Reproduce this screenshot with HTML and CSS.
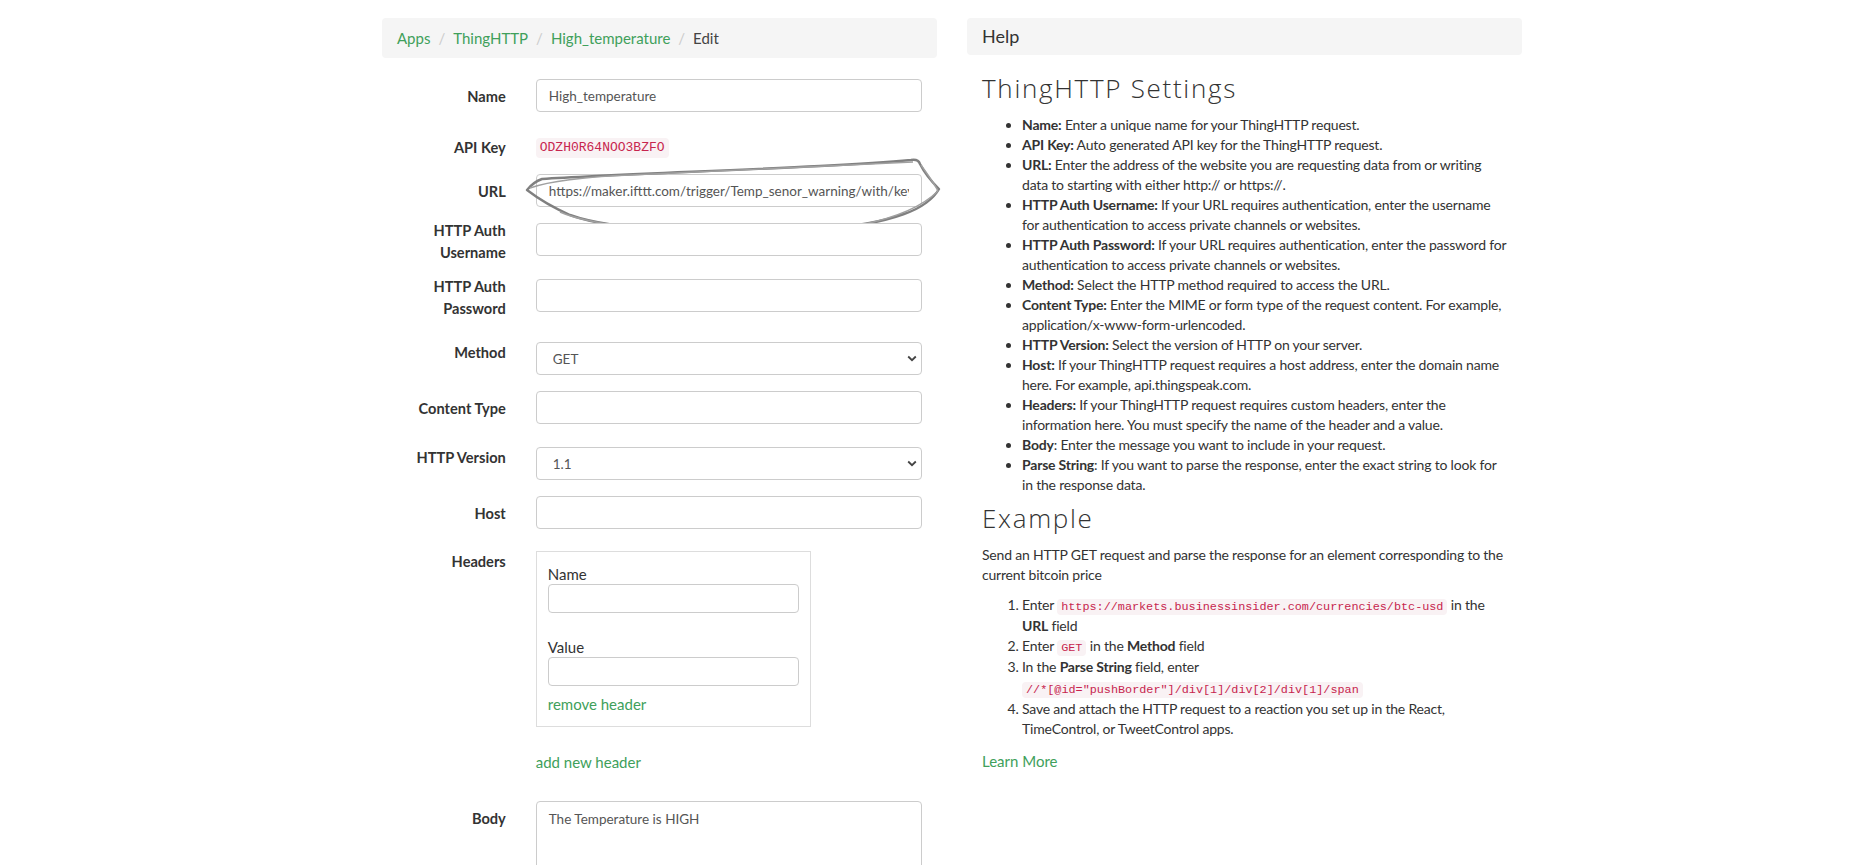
FILE: index.html
```html
<!DOCTYPE html>
<html lang="en">
<head>
<meta charset="utf-8">
<title>ThingHTTP - Edit</title>
<link rel="stylesheet" href="styles.css">
</head>
<body>
<div class="page">
  <div class="col-left">
    <ol class="breadcrumb">
      <li><a href="#">Apps</a></li>
      <li><a href="#">ThingHTTP</a></li>
      <li><a href="#">High_temperature</a></li>
      <li class="active">Edit</li>
    </ol>

    <form class="form">
      <div class="row mb-18">
        <label class="lbl">Name</label>
        <div class="fld"><input class="ctl" type="text" value="High_temperature"></div>
      </div>

      <div class="row row-api mb-11">
        <label class="lbl">API Key</label>
        <div class="fld"><code class="apikey">ODZH0R64NOO3BZFO</code></div>
      </div>

      <div class="row row-url mb-16">
        <label class="lbl">URL</label>
        <div class="fld"><input class="ctl" type="text" value="https://maker.ifttt.com/trigger/Temp_senor_warning/with/key/"></div>
        <svg class="scribble" width="430" height="84" viewBox="0 0 430 84" aria-hidden="true">
          <path d="M7 35 C 11 30, 16 26, 22 24 C 80 20, 200 16, 300 11 C 340 9, 370 7, 391 5 C 397 4, 399 6, 400 9 C 404 17, 412 27, 419 34 C 414 43, 402 53, 384 59 C 362 67, 332 72, 300 74 C 250 77, 200 77, 150 75 C 110 73, 72 68, 50 60 C 34 53, 20 45, 7 35 Z" fill="none" stroke="#808080" stroke-width="2.4" stroke-linejoin="round"/>
          <path d="M10 33 C 30 26, 60 22, 110 20 C 190 16, 280 12, 393 7 M401 10 C 408 20, 414 28, 418 36 C 405 49, 380 62, 340 70 C 290 77, 200 79, 130 74 C 90 71, 55 64, 40 57" fill="none" stroke="#a0a0a0" stroke-width="1.4"/>
        </svg>
      </div>

      <div class="row row-two mb-15">
        <label class="lbl">HTTP Auth Username</label>
        <div class="fld"><input class="ctl" type="text"></div>
      </div>

      <div class="row row-two mb-22">
        <label class="lbl">HTTP Auth Password</label>
        <div class="fld"><input class="ctl" type="password"></div>
      </div>

      <div class="row row-sel mb-16">
        <label class="lbl">Method</label>
        <div class="fld">
          <div class="sel">
            <select class="ctl ctl-sel"><option>GET</option></select>
            <svg class="chev" width="10" height="7" viewBox="0 0 10 7" aria-hidden="true"><path d="M1.2 1.5 L5 5.2 L8.8 1.5" fill="none" stroke="#444" stroke-width="1.8"/></svg>
          </div>
        </div>
      </div>

      <div class="row mb-23">
        <label class="lbl">Content Type</label>
        <div class="fld"><input class="ctl" type="text"></div>
      </div>

      <div class="row row-sel mb-16">
        <label class="lbl">HTTP Version</label>
        <div class="fld">
          <div class="sel">
            <select class="ctl ctl-sel"><option>1.1</option></select>
            <svg class="chev" width="10" height="7" viewBox="0 0 10 7" aria-hidden="true"><path d="M1.2 1.5 L5 5.2 L8.8 1.5" fill="none" stroke="#444" stroke-width="1.8"/></svg>
          </div>
        </div>
      </div>

      <div class="row mb-22">
        <label class="lbl">Host</label>
        <div class="fld"><input class="ctl" type="text"></div>
      </div>

      <div class="row row-sel">
        <label class="lbl">Headers</label>
        <div class="fld">
          <div class="hdrbox">
            <div class="hdr-group">
              <label class="hdr-lbl">Name</label>
              <input class="ctl ctl-sm" type="text">
            </div>
            <div class="hdr-group hdr-group-2">
              <label class="hdr-lbl">Value</label>
              <input class="ctl ctl-sm" type="text">
            </div>
            <a class="hdr-link" href="#">remove header</a>
          </div>
          <a class="add-link" href="#">add new header</a>
        </div>
      </div>

      <div class="row row-body">
        <label class="lbl">Body</label>
        <div class="fld"><textarea class="ctl ctl-area">The Temperature is HIGH</textarea></div>
      </div>
    </form>
  </div>

  <div class="col-right">
    <div class="help-bar">Help</div>
    <div class="help-body">
      <h3 class="h-settings">ThingHTTP Settings</h3>
      <ul class="help-list">
        <li><b>Name:</b> Enter a unique name for your ThingHTTP request.</li>
        <li><b>API Key:</b> Auto generated API key for the ThingHTTP request.</li>
        <li><b>URL:</b> Enter the address of the website you are requesting data from or writing<br>data to starting with either http:// or https://.</li>
        <li><b>HTTP Auth Username:</b> If your URL requires authentication, enter the username<br>for authentication to access private channels or websites.</li>
        <li><b>HTTP Auth Password:</b> If your URL requires authentication, enter the password for<br>authentication to access private channels or websites.</li>
        <li><b>Method:</b> Select the HTTP method required to access the URL.</li>
        <li><b>Content Type:</b> Enter the MIME or form type of the request content. For example,<br>application/x-www-form-urlencoded.</li>
        <li><b>HTTP Version:</b> Select the version of HTTP on your server.</li>
        <li><b>Host:</b> If your ThingHTTP request requires a host address, enter the domain name<br>here. For example, api.thingspeak.com.</li>
        <li><b>Headers:</b> If your ThingHTTP request requires custom headers, enter the<br>information here. You must specify the name of the header and a value.</li>
        <li><b>Body</b>: Enter the message you want to include in your request.</li>
        <li><b>Parse String</b>: If you want to parse the response, enter the exact string to look for<br>in the response data.</li>
      </ul>
      <h3 class="h-example">Example</h3>
      <p class="help-p">Send an HTTP GET request and parse the response for an element corresponding to the<br>current bitcoin price</p>
      <ol class="help-ol">
        <li>Enter <code>https://markets.businessinsider.com/currencies/btc-usd</code> in the<br><b>URL</b> field</li>
        <li>Enter <code>GET</code> in the <b>Method</b> field</li>
        <li>In the <b>Parse String</b> field, enter<br><code>//*[@id="pushBorder"]/div[1]/div[2]/div[1]/span</code></li>
        <li>Save and attach the HTTP request to a reaction you set up in the React,<br>TimeControl, or TweetControl apps.</li>
      </ol>
      <a class="learn" href="#">Learn More</a>
    </div>
  </div>
</div>
</body>
</html>
```

FILE: styles.css
```css
* { box-sizing: border-box; }

html, body {
  margin: 0;
  padding: 0;
  background: #fff;
}

body {
  font-family: "Lato", "Liberation Sans", sans-serif;
  font-size: 14px;
  line-height: 20px;
  color: #333;
  overflow: hidden;
}

a {
  color: #40a05b;
  text-decoration: none;
}

.page {
  display: flex;
  gap: 30px;
  width: 1140px;
  margin-left: 382px;
  padding-top: 18px;
}

.col-left,
.col-right {
  width: 555px;
  flex: none;
}

/* breadcrumb */
.breadcrumb {
  display: flex;
  margin: 0 0 21px;
  padding: 8px 15px;
  height: 40px;
  list-style: none;
  background: #f5f5f5;
  border-radius: 4px;
  font-size: 15px;
  line-height: 24px;
}

.breadcrumb li + li::before {
  content: "/";
  color: #ccc;
  padding: 0 8px;
}

.breadcrumb .active {
  color: #444;
}

/* form rows */
.form {
  margin: 0;
}

.row {
  position: relative;
  display: flex;
  align-items: flex-start;
}

.mb-11 { margin-bottom: 11px; }
.mb-15 { margin-bottom: 15px; }
.mb-16 { margin-bottom: 16px; }
.mb-18 { margin-bottom: 18px; }
.mb-22 { margin-bottom: 22px; }
.mb-23 { margin-bottom: 23px; }

.lbl {
  width: 138.75px;
  flex: none;
  padding: 7px 15px 0 10px;
  text-align: right;
  font-weight: 700;
  font-size: 14.6px;
  line-height: 22px;
  color: #333;
}

.row-two .lbl {
  padding-top: 0;
  margin-top: -3px;
}

.row-sel .lbl {
  padding-top: 0;
}

.fld {
  flex: 1;
  padding: 0 15px;
}

.ctl {
  display: block;
  width: 100%;
  height: 33px;
  padding: 0 12px;
  border: 1px solid #ccc;
  border-radius: 4px;
  background: #fff;
  font-family: "Lato", "Liberation Sans", sans-serif;
  font-size: 13.5px;
  color: #555;
  outline: none;
}

.row-api {
  height: 33px;
}

.apikey {
  display: inline-block;
  margin-top: 8px;
  padding: 0 4px;
  height: 20px;
  line-height: 20px;
  background: #f9f2f4;
  color: #c7254e;
  border-radius: 4px;
  font-family: "Liberation Mono", "DejaVu Sans Mono", monospace;
  font-size: 13px;
}

.scribble {
  position: absolute;
  left: 138px;
  top: -19px;
  pointer-events: none;
}

.sel {
  position: relative;
}

.ctl-sel {
  appearance: none;
  -webkit-appearance: none;
  padding-left: 16px;
}

.chev {
  position: absolute;
  right: 5px;
  top: 13px;
}

/* headers box */
.hdrbox {
  width: 275px;
  border: 1px solid #ddd;
  padding: 12px 11px 12px;
}

.hdr-lbl {
  display: block;
  font-size: 15px;
  line-height: 20px;
  color: #333;
}

.ctl-sm {
  height: 29px;
}

.hdr-group-2 {
  margin-top: 24px;
}

.hdr-link {
  display: block;
  margin-top: 8px;
  font-size: 15px;
  line-height: 20px;
}

.add-link {
  display: block;
  margin-top: 25px;
  font-size: 15px;
  line-height: 20px;
}

.row-body {
  margin-top: 29px;
}

.ctl-area {
  height: 100px;
  padding: 7px 12px;
  line-height: 20px;
  resize: none;
}

/* help */
.help-bar {
  height: 37px;
  padding: 0 15px;
  background: #f5f5f5;
  border-radius: 4px;
  font-family: "Lato", sans-serif;
  font-size: 18px;
  line-height: 37px;
  color: #333;
}

.help-body {
  padding: 0 0 0 15px;
  letter-spacing: -0.2px;
}

.h-settings,
.h-example {
  font-family: "Open Sans", "Lato", sans-serif;
  font-weight: 300;
  font-size: 26px;
  line-height: 30px;
  letter-spacing: 1.7px;
  color: #333;
  margin: 0;
}

.h-settings {
  margin-top: 18px;
  margin-bottom: 12px;
}

.h-example {
  margin-top: 8px;
  margin-bottom: 12px;
}

.help-list {
  margin: 0;
  padding-left: 40px;
}

.help-p {
  margin: 0 0 10px;
}

.help-ol {
  margin: 0 0 11px;
  padding-left: 40px;
}

.help-ol li {
  line-height: 20.7px;
}

.help-ol code {
  padding: 1px 4px;
  background: #f9f2f4;
  color: #c7254e;
  border-radius: 4px;
  font-family: "Liberation Mono", "DejaVu Sans Mono", monospace;
  font-size: 11.8px;
  line-height: 14px;
  letter-spacing: 0;
  white-space: nowrap;
}

.learn {
  display: block;
  font-size: 15px;
  line-height: 20px;
  letter-spacing: 0;
}
```
